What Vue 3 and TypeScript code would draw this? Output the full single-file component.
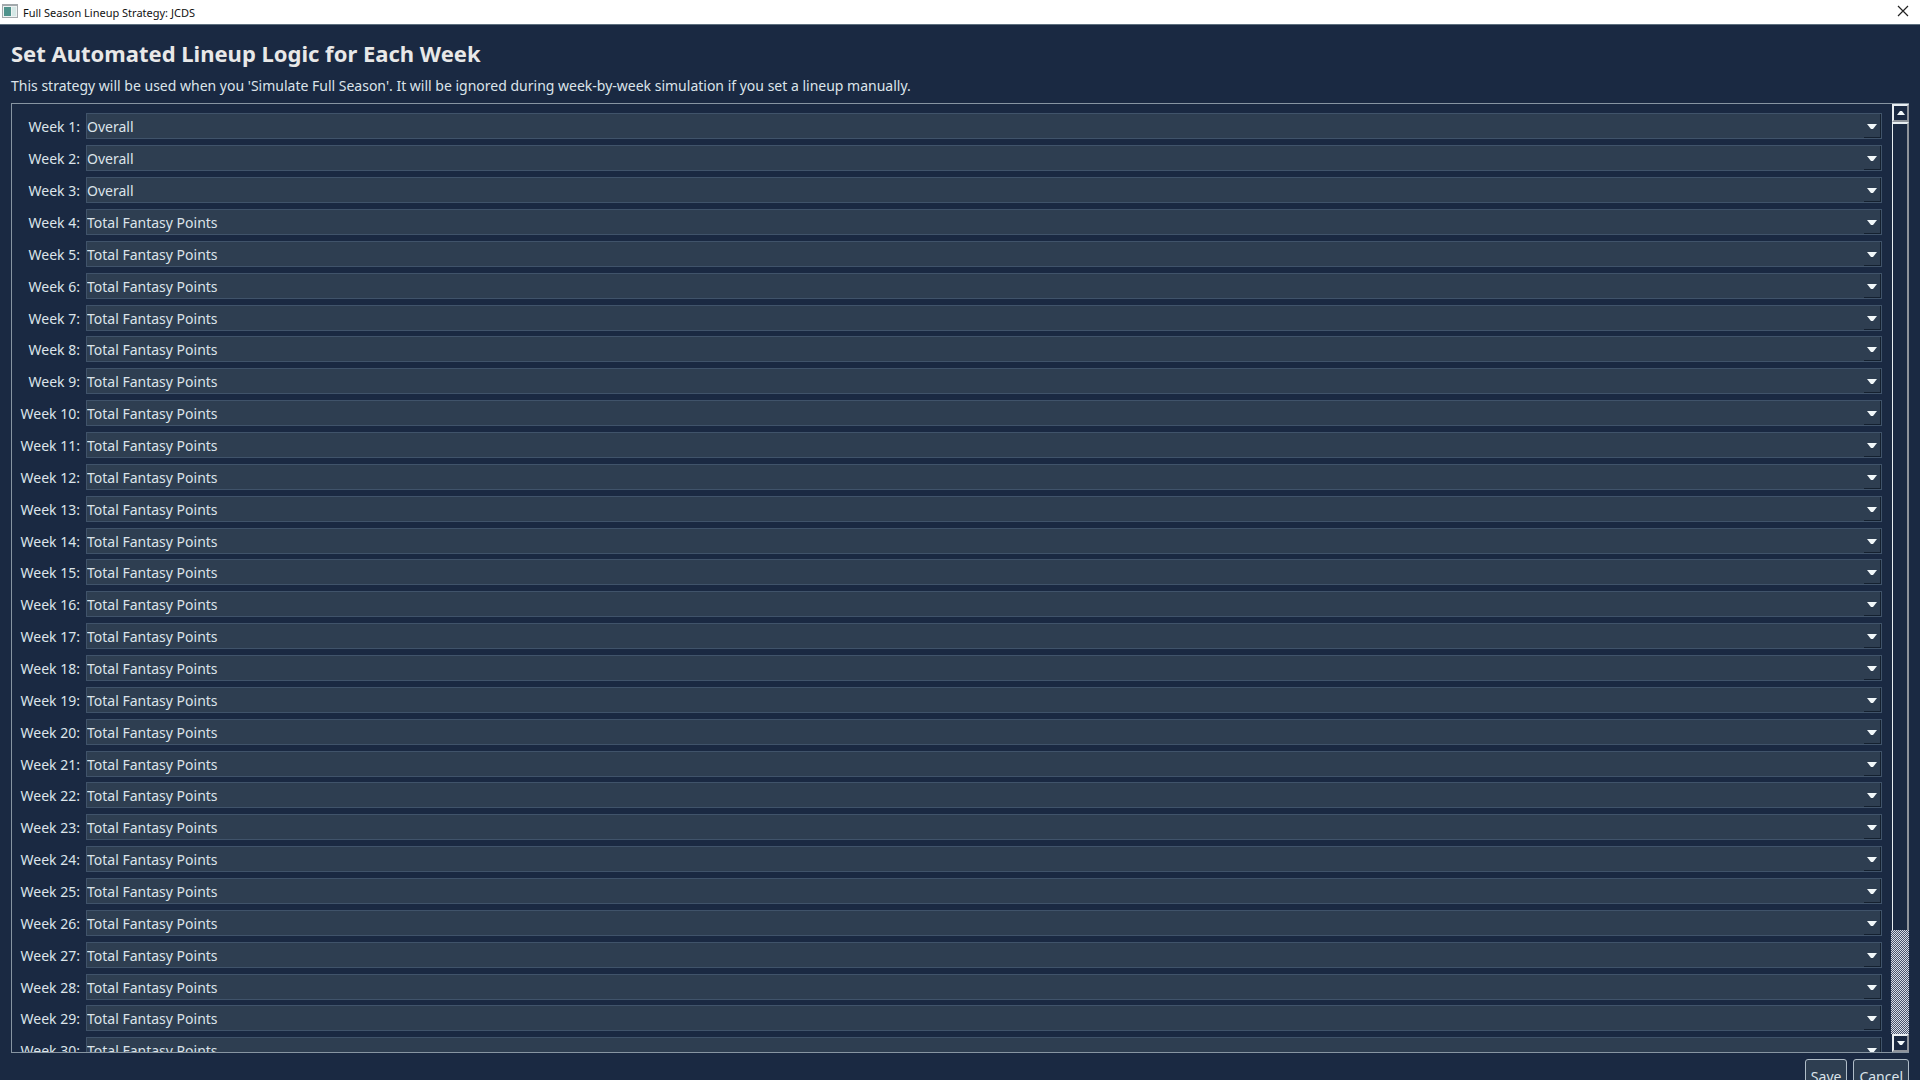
<script setup lang="ts">
import { ref } from 'vue'

const strategies = ['Overall', 'Total Fantasy Points']
const weeks = ref(
  Array.from({ length: 30 }, (_, i) => ({
    number: i + 1,
    strategy: i < 3 ? strategies[0] : strategies[1],
  })),
)
</script>

<template>
  <div class="window">
    <header class="titlebar">
      <svg class="app-icon" width="16" height="14" viewBox="0 0 16 14" aria-hidden="true">
        <rect x="0" y="0" width="16" height="14" fill="#a3a9ac" />
        <rect x="1" y="2" width="14" height="11" fill="#eef2f2" />
        <rect x="2" y="3" width="7" height="9" fill="#4f938c" />
        <rect x="10" y="3" width="4" height="9" fill="#d5e8e6" />
      </svg>
      <span class="caption">Full Season Lineup Strategy: JCDS</span>
      <button class="close" type="button" aria-label="Close">
        <svg width="12" height="12" viewBox="0 0 12 12"><path d="M1 1L11 11M11 1L1 11" stroke="#222" stroke-width="1.2" /></svg>
      </button>
    </header>

    <main class="body">
      <h1>Set Automated Lineup Logic for Each Week</h1>
      <p class="hint">This strategy will be used when you 'Simulate Full Season'. It will be ignored during week-by-week simulation if you set a lineup manually.</p>

      <section class="frame">
        <div class="list">
          <div v-for="week in weeks" :key="week.number" class="row">
            <label :for="`week-${week.number}`">Week {{ week.number }}:</label>
            <div class="combo">
              <select :id="`week-${week.number}`" v-model="week.strategy">
                <option v-for="s in strategies" :key="s">{{ s }}</option>
              </select>
              <span class="drop">
                <svg width="10" height="5" viewBox="0 0 10 5"><path d="M0 0H10L6 5H4Z" fill="#f2f8fa" /></svg>
              </span>
            </div>
          </div>
        </div>
        <div class="scrollbar">
          <button class="step" type="button" aria-label="Scroll up">
            <svg width="8" height="4" viewBox="0 0 8 4"><path d="M0 4H8L5 0H3Z" fill="#f2f8fa" /></svg>
          </button>
          <div class="thumb"></div>
          <div class="trough"></div>
          <button class="step" type="button" aria-label="Scroll down">
            <svg width="8" height="4" viewBox="0 0 8 4"><path d="M0 0H8L5 4H3Z" fill="#f2f8fa" /></svg>
          </button>
        </div>
      </section>

      <footer class="actions">
        <button class="action" type="button">Save</button>
        <button class="action" type="button">Cancel</button>
      </footer>
    </main>
  </div>
</template>

<style>
body {
  background: #1a2942;
}
</style>

<style scoped>
.window {
  display: flex;
  flex-direction: column;
  height: 100vh;
  overflow: hidden;
  background: #1a2942;
  color: #dce4ea;
  font-family: "Segoe UI", "Noto Sans", "Open Sans", sans-serif;
  font-size: 14px;
}

.titlebar {
  display: flex;
  flex: none;
  align-items: center;
  gap: 5px;
  height: 24px;
  padding: 0 11px 0 2px;
  border-bottom: 1px solid #5d6f7e;
  background: #fff;
  color: #111;
  font-size: 11px;
}

.app-icon {
  margin-bottom: 2px;
}

.caption {
  flex: 1;
}

.close {
  display: flex;
  margin-bottom: 2px;
  padding: 0;
  border: 0;
  background: none;
}

.body {
  display: flex;
  flex: 1;
  flex-direction: column;
  min-height: 0;
  padding: 0 11px;
}

h1 {
  margin: 11px 0 0;
  color: #e8e8e8;
  font-size: 22px;
  line-height: 34px;
}

.hint {
  margin: 4px 0 5px;
  line-height: 24px;
}

.frame {
  display: flex;
  flex: 1;
  min-height: 0;
  border: 1px solid #8795a2;
  border-right: 0;
}

.list {
  flex: 1;
  padding: 9px 9px 0 6px;
  overflow: hidden;
}

.row {
  display: flex;
  align-items: center;
  gap: 6px;
  height: 26px;
  margin-bottom: 6px;
}

.row:nth-child(7n) {
  margin-bottom: 5px;
}

label {
  width: 62px;
  padding-top: 1px;
  text-align: right;
  white-space: nowrap;
}

.combo {
  position: relative;
  flex: 1;
}

select {
  display: block;
  width: 100%;
  height: 26px;
  padding: 1px 20px 0 0;
  appearance: none;
  border: 1px solid #40536a;
  border-radius: 0;
  background: #2e3e51;
  color: inherit;
  font: inherit;
}

.drop {
  position: absolute;
  top: 1px;
  right: 1px;
  bottom: 1px;
  display: flex;
  box-sizing: border-box;
  align-items: center;
  justify-content: center;
  width: 17px;
  padding-top: 2px;
  border-right: 1px solid #14202f;
  border-bottom: 1px solid #14202f;
  pointer-events: none;
}

.scrollbar {
  display: flex;
  flex-direction: column;
  width: 18px;
}

.step {
  display: flex;
  flex: none;
  align-items: center;
  justify-content: center;
  width: 17px;
  height: 18px;
  margin-left: 1px;
  padding: 0;
  border: 2px solid;
  border-color: #e8eef2 #8f949c #8f949c #e8eef2;
  background: #1a2942;
}

.thumb {
  flex: 808;
  margin-left: 1px;
  border: solid #e8eef2;
  border-width: 2px 2px 0 1px;
  border-right-color: #8f949c;
}

.trough {
  flex: 104;
  background: repeating-conic-gradient(#d8dce6 0 25%, #48546c 0 50%) 0 0 / 2px 2px;
}

.actions {
  display: flex;
  flex: none;
  gap: 6px;
  justify-content: flex-end;
  height: 21px;
  margin-top: 6px;
}

.action {
  flex: none;
  height: 34px;
  padding: 0 5px;
  border: 1px solid #b0bdc8;
  border-radius: 3px;
  background: #2e3e51;
  color: inherit;
  font: inherit;
}
</style>
